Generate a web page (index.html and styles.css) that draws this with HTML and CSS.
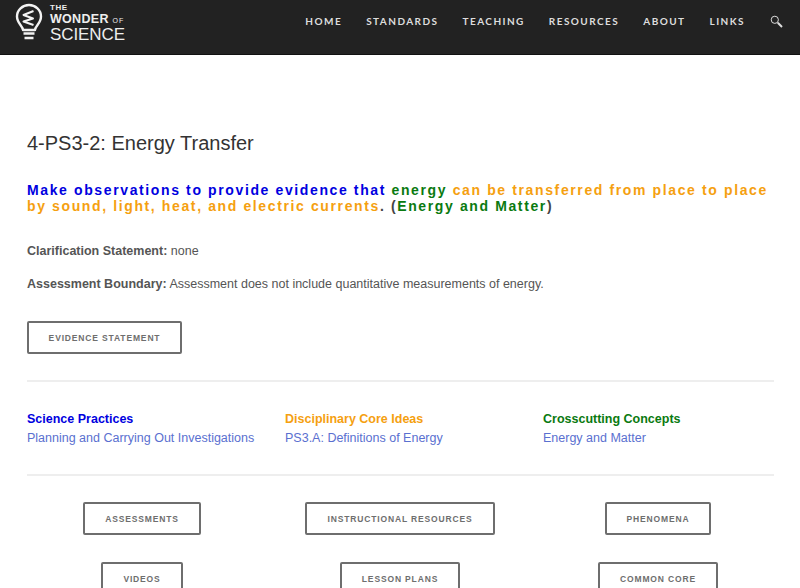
FILE: index.html
```html
<!DOCTYPE html>
<html lang="en">
<head>
    <meta charset="UTF-8">
    <meta name="viewport" content="width=device-width, initial-scale=1.0">
    <title>4-PS3-2: Energy Transfer</title>
    <link rel="stylesheet" href="styles.css">
</head>
<body>
    <header class="site-header">
        <a class="logo" href="#">
            <svg class="logo-bulb" width="28" height="41" viewBox="0 0 28 41" fill="none" stroke="#f2f2f2">
                <path d="M8 27 C8 23 2 20.500 2 13.500 C2 7 7.500 2 14 2 C20.500 2 26 7 26 13.500 C26 20.500 20 23 20 27 Z" stroke-width="2.400" stroke-linejoin="round"/>
                <path d="M18.500 8 L8.500 12 L18 15.500 L8.500 18.500 L18.500 22" stroke-width="2" stroke-linejoin="round"/>
                <path d="M8.500 30.500 H19.500 M9.500 35 H18.500" stroke-width="2.600"/>
            </svg>
            <span class="logo-text">
                <span class="logo-the">THE</span>
                <span class="logo-wonder">WONDER <small>OF</small></span>
                <span class="logo-science">SCIENCE</span>
            </span>
        </a>
        <nav class="main-nav">
            <a href="#">HOME</a>
            <a href="#">STANDARDS</a>
            <a href="#">TEACHING</a>
            <a href="#">RESOURCES</a>
            <a href="#">ABOUT</a>
            <a href="#">LINKS</a>
            <svg class="search-icon" width="13" height="13" viewBox="0 0 13 13" fill="none" stroke="#ddd">
                <circle cx="4.800" cy="4.800" r="3.600" stroke-width="1"/>
                <path d="M7.800 7.800 L12 12" stroke-width="2"/>
            </svg>
        </nav>
    </header>

    <main class="content">
        <h1>4-PS3-2: Energy Transfer</h1>
        <p class="expectation">
            <span class="blue">Make observations to provide evidence that</span>
            <span class="green">energy</span>
            <span class="orange">can be transferred from place to place</span><br>
            <span class="orange">by sound, light, heat, and electric currents</span>. (<span class="green">Energy and Matter</span>)
        </p>
        <p class="note"><strong>Clarification Statement:</strong> none</p>
        <p class="note"><strong>Assessment Boundary:</strong> Assessment does not include quantitative measurements of energy.</p>
        <a class="btn evidence-btn" href="#">EVIDENCE STATEMENT</a>

        <hr>

        <div class="dimensions">
            <div>
                <h3 class="blue">Science Practices</h3>
                <a href="#">Planning and Carrying Out Investigations</a>
            </div>
            <div>
                <h3 class="orange">Disciplinary Core Ideas</h3>
                <a href="#">PS3.A: Definitions of Energy</a>
            </div>
            <div>
                <h3 class="green">Crosscutting Concepts</h3>
                <a href="#">Energy and Matter</a>
            </div>
        </div>

        <hr>

        <div class="btn-grid">
            <div class="btn-cell"><a class="btn" href="#">ASSESSMENTS</a></div>
            <div class="btn-cell"><a class="btn" href="#">INSTRUCTIONAL RESOURCES</a></div>
            <div class="btn-cell"><a class="btn" href="#">PHENOMENA</a></div>
            <div class="btn-cell"><a class="btn" href="#">VIDEOS</a></div>
            <div class="btn-cell"><a class="btn" href="#">LESSON PLANS</a></div>
            <div class="btn-cell"><a class="btn" href="#">COMMON CORE</a></div>
        </div>
    </main>
</body>
</html>
```

FILE: styles.css
```css
html, body {
    height: 588px;
    overflow: hidden;
}
body {
    margin: 0;
    background: #fff;
    color: #555;
    font-family: "Liberation Sans", Arial, sans-serif;
    font-size: 13px;
}
a {
    text-decoration: none;
}
.site-header {
    height: 55px;
    box-sizing: border-box;
    background: #222;
    border-bottom: 1px solid #111;
    display: flex;
    justify-content: space-between;
    padding: 0 17px 0 15px;
}
.logo {
    display: flex;
    align-items: flex-start;
    gap: 7px;
    color: #eee;
    padding-top: 3px;
}
.logo-text {
    display: flex;
    flex-direction: column;
}
.logo-the {
    font-size: 8px;
    font-weight: bold;
    line-height: 9px;
    letter-spacing: 0.5px;
}
.logo-wonder {
    font-size: 12.500px;
    font-weight: bold;
    line-height: 14px;
    letter-spacing: 0.300px;
}
.logo-wonder small {
    font-size: 7px;
    font-weight: normal;
    letter-spacing: 1px;
}
.logo-science {
    font-size: 17px;
    line-height: 14px;
    letter-spacing: -0.100px;
}
.main-nav {
    display: flex;
    align-items: flex-start;
    gap: 24px;
    padding-top: 14px;
}
.main-nav a {
    color: #ddd;
    font-family: Lato, "Liberation Sans", sans-serif;
    font-size: 10px;
    font-weight: bold;
    line-height: 14px;
    letter-spacing: 1.450px;
}
.search-icon {
    margin: 1px 0 0 1px;
}
.content {
    padding: 75px 26px 0 27px;
}
h1 {
    margin: 0;
    color: #333;
    font-size: 20px;
    font-weight: normal;
    line-height: 26px;
}
.expectation {
    margin: 26px 0 0;
    color: #444;
    font-size: 14px;
    font-weight: bold;
    line-height: 16px;
    letter-spacing: 1.620px;
}
.blue {
    color: #0000e0;
}
.green {
    color: #0a7a10;
}
.orange {
    color: #f5a010;
}
.note {
    margin: 29px 0 0;
    line-height: 17px;
    font-size: 12.500px;
}
.note + .note {
    margin-top: 16px;
}
.btn {
    display: inline-flex;
    align-items: center;
    justify-content: center;
    box-sizing: border-box;
    height: 33px;
    padding: 0 20px;
    border: 2px solid #6e6e6e;
    border-radius: 2px;
    color: #6e6e6e;
    font-size: 8.500px;
    font-weight: bold;
    letter-spacing: 0.850px;
    white-space: nowrap;
}
.evidence-btn {
    display: flex;
    width: 155px;
    margin-top: 28px;
}
hr {
    border: 0;
    height: 2px;
    background: #eee;
    margin: 26px 0;
}
.dimensions {
    display: grid;
    grid-template-columns: repeat(3, 258px);
    font-size: 12.500px;
    line-height: 20px;
}
h3 {
    margin: 1px 0 -1px;
    font-size: 12.500px;
}
.dimensions a {
    color: #5a70d0;
}
.btn-grid {
    display: grid;
    grid-template-columns: repeat(3, 258px);
    row-gap: 27px;
    margin-left: -14px;
}
.btn-cell {
    display: flex;
    justify-content: center;
}
```
